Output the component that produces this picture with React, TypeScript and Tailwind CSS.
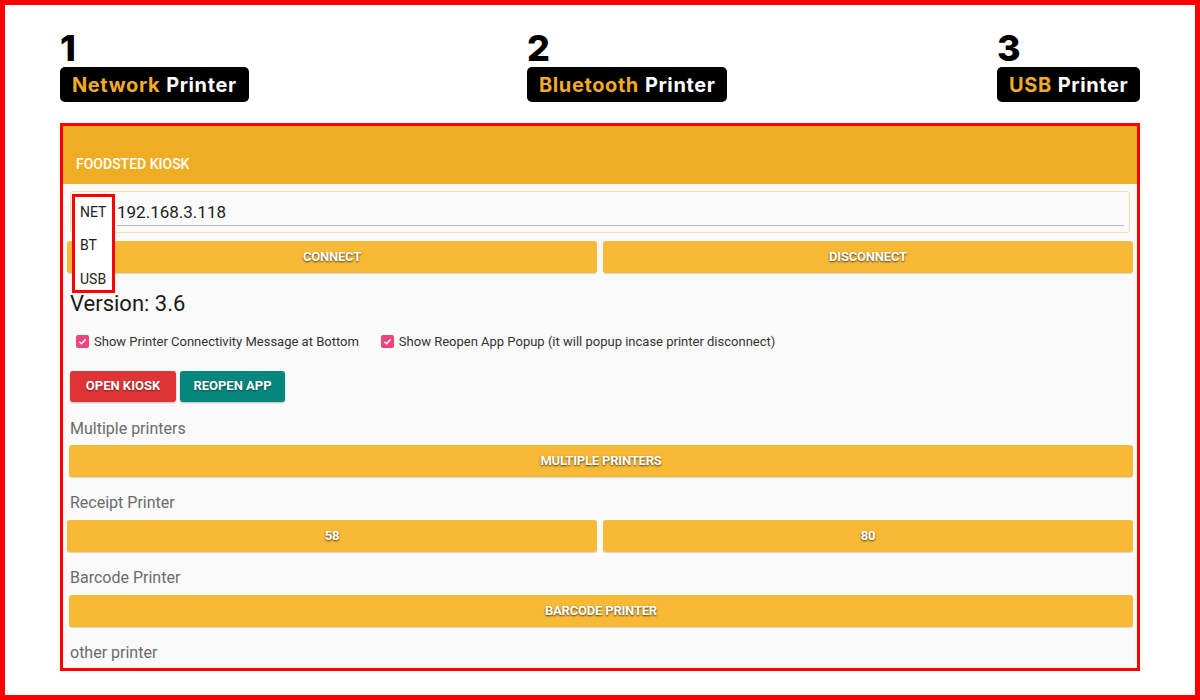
import React from "react";

const Badge = ({ num, accent }: { num: string; accent: string }) => (
  <div className="flex flex-col items-start">
    <div className="text-[36px] leading-[36px] font-extrabold text-black font-['Inter',sans-serif]">{num}</div>
    <div className="mt-[1px] h-[35px] flex items-center px-[12px] bg-black rounded-[5px] text-[20px] font-bold font-['Inter',sans-serif] tracking-[0.6px]">
      <span className="text-[#f0ac24]">{accent}</span>
      <span className="text-white ml-[6px]">Printer</span>
    </div>
  </div>
);

const YButton = ({ label, className = "" }: { label: string; className?: string }) => (
  <button className={`h-[32px] bg-[#f7b936] rounded-[3px] shadow-[0_1px_1px_rgba(0,0,0,0.15)] text-white text-[13px] font-bold tracking-[-0.2px] [text-shadow:0_1px_2px_rgba(0,0,0,0.7)] ${className}`}>
    {label}
  </button>
);

const Check = ({ label }: { label: string }) => (
  <label className="flex items-center gap-[5px] text-[13px] text-[#333]">
    <span className="w-[13px] h-[13px] rounded-[2px] bg-[#f0447e] flex items-center justify-center">
      <svg width="9" height="9" viewBox="0 0 10 10" fill="none">
        <path d="M1.5 5.2 L4 7.5 L8.5 2.5" stroke="white" strokeWidth="1.6" />
      </svg>
    </span>
    {label}
  </label>
);

const SectionLabel = ({ text, className = "" }: { text: string; className?: string }) => (
  <div className={`text-[16px] leading-[20px] text-[#6b6b6b] ${className}`}>{text}</div>
);

export default function App() {
  return (
    <div className="w-[1200px] h-[700px] border-[5px] border-[#ff0000] bg-white overflow-hidden font-['Roboto',sans-serif]">
      <div className="flex pt-[25px] pl-[55px]">
        <div className="w-[467px]"><Badge num="1" accent="Network" /></div>
        <div className="w-[470px]"><Badge num="2" accent="Bluetooth" /></div>
        <div><Badge num="3" accent="USB" /></div>
      </div>

      <div className="ml-[55px] mt-[21px] w-[1080px] h-[548px] border-[3px] border-[#ff0000] bg-[#fafafa]">
        <div className="h-[58px] bg-[#efad23] pt-[30px] pl-[13px] text-white text-[14px] leading-[16px] font-medium">
          FOODSTED KIOSK
        </div>

        <div className="relative mx-[7px] mt-[7px] h-[42px] border border-[#f7dca3] rounded-[3px] bg-[#fafafa]">
          <div className="absolute left-[46px] right-[5px] top-[9px] text-[17px] leading-[22px] text-[#222]">192.168.3.118</div>
          <div className="absolute left-[46px] right-[5px] top-[33px] h-[1px] bg-[#b9b9b9]" />
          <div className="absolute left-[1px] top-[2px] w-[43px] h-[99px] border-[3px] border-[#ff0000] bg-white z-10 flex flex-col pl-[5px] text-[14px] text-[#222]">
            <div className="mt-[6px] leading-[18px]">NET</div>
            <div className="mt-[15px] leading-[18px]">BT</div>
            <div className="mt-[16px] leading-[18px]">USB</div>
          </div>
        </div>

        <div className="flex gap-[6px] px-[4px] mt-[8px]">
          <YButton label="CONNECT" className="flex-1 h-[31px]" />
          <YButton label="DISCONNECT" className="flex-1 h-[31px]" />
        </div>

        <div className="ml-[7px] mt-[18px] text-[22px] leading-[26px] text-[#1a1a1a]">Version: 3.6</div>

        <div className="flex gap-[22px] ml-[13px] mt-[15px]">
          <Check label="Show Printer Connectivity Message at Bottom" />
          <Check label="Show Reopen App Popup (it will popup incase printer disconnect)" />
        </div>

        <div className="flex gap-[4px] ml-[7px] mt-[19px]">
          <button className="w-[106px] h-[31px] bg-[#e03536] rounded-[3px] shadow-[0_1px_2px_rgba(0,0,0,0.25)] text-white text-[13px] font-bold [text-shadow:0_1px_2px_rgba(0,0,0,0.5)]">OPEN KIOSK</button>
          <button className="w-[105px] h-[31px] bg-[#05877d] rounded-[3px] shadow-[0_1px_2px_rgba(0,0,0,0.25)] text-white text-[13px] font-bold [text-shadow:0_1px_2px_rgba(0,0,0,0.5)]">REOPEN APP</button>
        </div>

        <SectionLabel text="Multiple printers" className="ml-[7px] mt-[17px]" />
        <div className="flex pl-[6px] pr-[4px] mt-[6px]">
          <YButton label="MULTIPLE PRINTERS" className="flex-1" />
        </div>

        <SectionLabel text="Receipt Printer" className="ml-[7px] mt-[16px]" />
        <div className="flex gap-[6px] px-[4px] mt-[7px]">
          <YButton label="58" className="flex-1" />
          <YButton label="80" className="flex-1" />
        </div>

        <SectionLabel text="Barcode Printer" className="ml-[7px] mt-[16px]" />
        <div className="flex pl-[6px] pr-[4px] mt-[7px]">
          <YButton label="BARCODE PRINTER" className="flex-1" />
        </div>

        <SectionLabel text="other printer" className="ml-[7px] mt-[16px]" />
      </div>
    </div>
  );
}
